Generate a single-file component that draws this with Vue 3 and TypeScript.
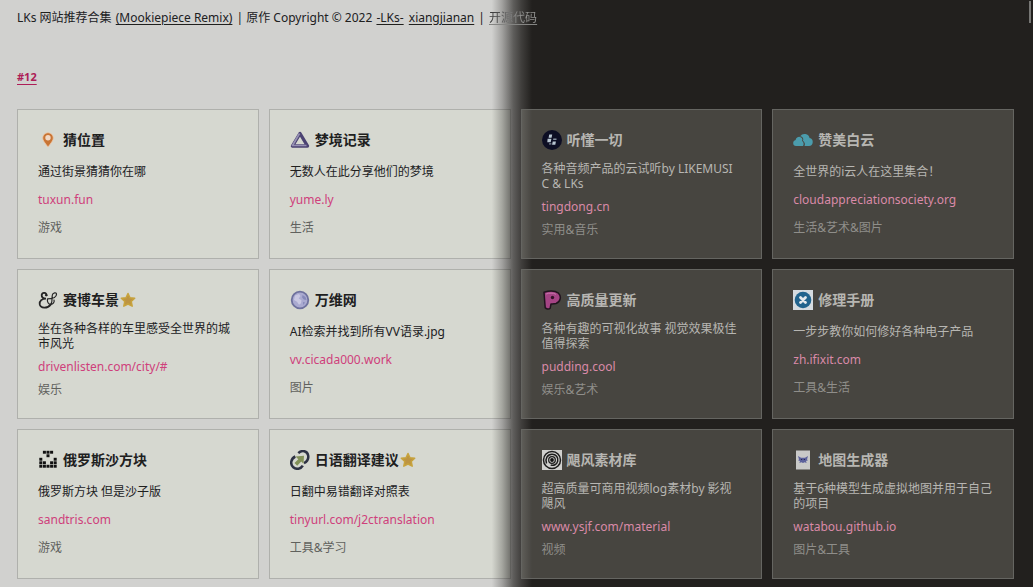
<script setup lang="ts">
type Icon =
  | 'pin' | 'triangle' | 'tiles' | 'cloud' | 'ampersand' | 'globe'
  | 'pudding' | 'wrench' | 'blocks' | 'cycle' | 'spiral' | 'map'

interface Site {
  icon: Icon
  title: string
  desc: string
  link: string
  tag: string
  star?: boolean
}

const sites: Site[] = [
  { icon: 'pin', title: '猜位置', desc: '通过街景猜猜你在哪', link: 'tuxun.fun', tag: '游戏' },
  { icon: 'triangle', title: '梦境记录', desc: '无数人在此分享他们的梦境', link: 'yume.ly', tag: '生活' },
  { icon: 'tiles', title: '听懂一切', desc: '各种音频产品的云试听by LIKEMUSI\nC & LKs', link: 'tingdong.cn', tag: '实用&音乐' },
  { icon: 'cloud', title: '赞美白云', desc: '全世界的i云人在这里集合！', link: 'cloudappreciationsociety.org', tag: '生活&艺术&图片' },
  { icon: 'ampersand', title: '赛博车景', desc: '坐在各种各样的车里感受全世界的城市风光', link: 'drivenlisten.com/city/#', tag: '娱乐', star: true },
  { icon: 'globe', title: '万维网', desc: 'AI检索并找到所有VV语录.jpg', link: 'vv.cicada000.work', tag: '图片' },
  { icon: 'pudding', title: '高质量更新', desc: '各种有趣的可视化故事 视觉效果极佳 值得探索', link: 'pudding.cool', tag: '娱乐&艺术' },
  { icon: 'wrench', title: '修理手册', desc: '一步步教你如何修好各种电子产品', link: 'zh.ifixit.com', tag: '工具&生活' },
  { icon: 'blocks', title: '俄罗斯沙方块', desc: '俄罗斯方块 但是沙子版', link: 'sandtris.com', tag: '游戏' },
  { icon: 'cycle', title: '日语翻译建议', desc: '日翻中易错翻译对照表', link: 'tinyurl.com/j2ctranslation', tag: '工具&学习', star: true },
  { icon: 'spiral', title: '飓风素材库', desc: '超高质量可商用视频log素材by 影视飓风', link: 'www.ysjf.com/material', tag: '视频' },
  { icon: 'map', title: '地图生成器', desc: '基于6种模型生成虚拟地图并用于自己的项目', link: 'watabou.github.io', tag: '图片&工具' },
]

const blockRows = ['.###.', '..#..', '#...#', '##.##', '#####']
const blockCells = blockRows.flatMap((row, y) =>
  [...row].flatMap((c, x) => (c === '#' ? [{ x: 1.3 + x * 3.6, y: 0.8 + y * 3.5 }] : [])),
)
</script>

<template>
  <div class="page">
    <header class="top">
      LKs 网站推荐合集 <a href="#remix">(Mookiepiece Remix)</a> | 原作 Copyright © 2022
      <a href="#lks">-LKs-</a>&nbsp;<a href="#author">xiangjianan</a> |
      <a href="#source" class="source">开源代码</a>
    </header>
    <h2 class="issue"><a id="issue-12" href="#issue-12">#12</a></h2>
    <div class="shade" aria-hidden="true"></div>
    <main class="grid">
      <article v-for="site in sites" :key="site.link" class="card">
        <h3 class="title">
          <svg class="icon" viewBox="0 0 20 20" aria-hidden="true">
            <g v-if="site.icon === 'pin'">
              <path d="M10 17C7 13 4.700 10.500 4.700 8a5.300 5.300 0 0 1 10.600 0c0 2.500-2.300 5-5.300 9z" fill="#c87535" stroke="#efc6a4" stroke-width="0.800" />
              <circle cx="10" cy="7.700" r="2.700" fill="#f1d9c6" />
            </g>
            <g v-else-if="site.icon === 'triangle'" stroke-linejoin="round" fill="none">
              <path d="M10 3.500 2.500 16h15z" stroke="#4b4272" stroke-width="3.400" />
              <path d="M9.500 3.500 2.500 15.500h14" stroke="#9690b3" stroke-width="1.700" />
            </g>
            <g v-else-if="site.icon === 'tiles'">
              <circle cx="10" cy="10" r="10" fill="#0d0e24" />
              <g fill="#b9c6d2">
                <path d="M7.200 4.500h3l-.6 3.300h-3zM5.600 8.800h3.800l-.7 3.500H5.300zM10.700 11.500h3.200l-.6 3.300h-3.200z" />
                <path d="M11.300 8.600h3.200v1.300h-3.400zM7.200 13.200h2.200v1.300H7z" opacity=".7" />
              </g>
            </g>
            <g v-else-if="site.icon === 'cloud'" fill="#4b9cac">
              <path d="M11.500 16H16a4 4 0 0 0 .6-7.900A5.200 5.200 0 0 0 7.200 6.300C10 6.700 10.800 9 10 10.700c1.800 1.500 2.400 3.500 1.500 5.300z" />
              <path d="M.2 13.300A3 3 0 0 1 2.600 10 3.700 3.700 0 0 1 7 6.900c2.400.5 2.800 2.600 2 4.100 1.900 1.200 2 3.500 1 5H3A2.800 2.800 0 0 1 .2 13.300z" />
            </g>
            <g v-else-if="site.icon === 'ampersand'" fill="none" stroke="#252525" stroke-linecap="round">
              <path d="M8.300 5.200C9 2.600 4.200 1.700 3.700 5 3.400 7.500 5.500 8.600 8 8.600 4 8.600 1.300 11 1.700 14.200 2.400 18.600 9.500 18.900 12.600 14.600" stroke-width="1.800" />
              <path d="M12.600 14.600C15 11 13.700 8 14.300 5.200 14.800 2.400 18.500 2 18.500 4.200 18.500 7 14.500 8.700 9.500 8.800M9.500 8.800c-.6 3.200 1 5.600 3.200 5.600 2.500 0 4-2.400 3.300-4.400" stroke-width="1.200" />
              <circle cx="8.200" cy="5.200" r=".8" fill="#252525" />
            </g>
            <g v-else-if="site.icon === 'globe'">
              <circle cx="10" cy="10" r="8.300" fill="#aaaad0" stroke="#6e719d" stroke-width="1.800" />
              <path d="M5 5.500 9 4l1.500 2-1.800 2.500 2.800 1.800-.5 3-2 1.500-2-3L4 10z" fill="#c9c8e2" />
              <path d="M12.500 5l3 2 1 3-2.700-.4-1.700-2zM13 12l2 .6-1.700 2.400z" fill="#8589b8" />
            </g>
            <g v-else-if="site.icon === 'pudding'">
              <path d="M2 2.200C6.500.8 13 .5 16.500 3.200c3.500 3.500 1.500 9-2.500 10.300-2 .6-4 .4-5 .5l-.8 4.200c-1.300 1.200-4 .8-5-.5z" fill="#a54485" stroke="#20131e" stroke-width="1.500" stroke-linejoin="round" />
              <path d="M4 4c3-1 7-1.500 10 .3" stroke="#c876ad" fill="none" />
              <circle cx="10.500" cy="7.500" r="1.700" fill="#321128" />
            </g>
            <g v-else-if="site.icon === 'wrench'">
              <path d="M0 0h20v20H0z" fill="#d5dbe0" />
              <circle cx="10" cy="10" r="8.300" fill="#21638d" />
              <path d="m7.500 7.500 5 5m0-5-5 5" stroke="#e5e9ec" stroke-width="2.800" stroke-linecap="round" />
            </g>
            <g v-else-if="site.icon === 'blocks'" fill="#111">
              <rect v-for="(cell, i) in blockCells" :key="i" :x="cell.x" :y="cell.y" width="3" height="2.900" />
            </g>
            <g v-else-if="site.icon === 'cycle'" fill="none">
              <path d="M8.300 3.100C12-.5 17.500 1 18.200 5.600c.5 3.500-1.400 6.200-4.200 7.500M5.300 6.500C1 8.500-.3 14 3.300 17.300c3 2.500 7.700 1.700 9.500-1.600" stroke="#2d3143" stroke-width="2.500" />
              <path d="m5.500 6.500 8.500-.7-.5 8-2.300-2.300-4 4.200-2.700-2.700 3.800-3.700z" fill="#829058" />
            </g>
            <g v-else-if="site.icon === 'spiral'" fill="none">
              <path d="M0 0h20v20H0z" fill="#d0d0ce" />
              <circle cx="10" cy="10" r="8.500" stroke="#1d1d1d" stroke-width="1.500" />
              <path d="M4.500 13.500C2.700 9 5.500 4.300 10 4.300c4 0 6.500 3.200 5.700 6.800-.8 3.500-4.200 5.100-7 3.700" stroke="#1d1d1d" stroke-width="1.500" />
              <circle cx="10" cy="10" r="3.300" stroke="#1d1d1d" stroke-width="1.300" />
              <circle cx="10" cy="10" r="1.900" fill="#111" />
            </g>
            <g v-else>
              <path d="M3 .5h14v19H3z" fill="#c9c9c8" />
              <path d="m5 6 3 1.800h4L15 6l-1 3.500 1 .8-2 .6.600 2-2-.7-1.600.8-1.600-.8-2 .7.600-2-2-.6 1-.8z" fill="#5c619c" />
              <path d="M8 9.500h1.200M10.800 9.500H12" stroke="#26294f" />
            </g>
          </svg>
          <span>{{ site.title }}</span>
          <svg v-if="site.star" class="star" viewBox="0 0 16 16" role="img" aria-label="推荐">
            <path d="M8 1.500 10 5.800l4.700.5-3.500 3.200 1 4.700L8 12l-4.200 2.200 1-4.700-3.500-3.200L6 5.800z" fill="#bd9442" stroke="#c7a33d" stroke-width="1.500" stroke-linejoin="round" />
          </svg>
        </h3>
        <div class="body">
          <p class="desc">{{ site.desc }}</p>
          <a class="link" :href="'https://' + site.link">{{ site.link }}</a>
          <p class="tag">{{ site.tag }}</p>
        </div>
      </article>
    </main>
    <div class="thumb" aria-hidden="true"></div>
  </div>
</template>

<style>
html {
  height: 100%;
  overflow: hidden;
}
body {
  margin: 0;
  height: 100%;
  overflow: hidden;
}
</style>

<style scoped>
.page {
  position: relative;
  box-sizing: border-box;
  min-height: 100vh;
  padding: 10px 19px 10px 17px;
  background: #d1d1cf;
  color: #20201e;
  font: 12px/16px "Noto Sans", "Noto Sans CJK SC", sans-serif;
}
.top {
  position: relative;
  z-index: 2;
}
.top a {
  margin: 0 1px;
  color: inherit;
  text-underline-offset: 2px;
}
.top .source {
  color: transparent;
  background: linear-gradient(90deg, #333 0, #555 25%, #777 45%, #8d8d8b 60%, #9a9a98 100%);
  -webkit-background-clip: text;
  background-clip: text;
  text-decoration-color: #858583;
}
.issue {
  margin: 43px 0 24px;
  font-size: 11px;
  line-height: 16px;
}
.issue a {
  color: #ad1d57;
  text-underline-offset: 3px;
}
.shade {
  position: absolute;
  z-index: 1;
  inset: 0;
  background: linear-gradient(90deg, transparent 47.6%, rgba(35, 33, 31, 0.27) 48.6%, rgba(35, 33, 31, 0.66) 49.7%, rgba(35, 33, 31, 0.84) 50.5%, #22201e 51.5%);
  pointer-events: none;
}
.grid {
  display: grid;
  grid-template-columns: repeat(4, minmax(0, 1fr));
  gap: 10px;
}
.card {
  padding: 20px 20px 17px;
  border: 1px solid #afb0ac;
  background: #d6d8d0;
}
.card:nth-child(4n + 3),
.card:nth-child(4n) {
  position: relative;
  z-index: 2;
  border-color: #656561;
  background: rgba(255, 255, 240, 0.17);
  color: #b7b6b2;
}
.title {
  display: flex;
  align-items: center;
  height: 20px;
  margin: 0 0 7px;
  font-size: 14px;
  line-height: 20px;
}
.icon {
  width: 20px;
  height: 20px;
  margin-right: 5px;
}
.star {
  width: 16px;
  height: 16px;
  margin-left: 1px;
}
.body {
  display: flex;
  flex-direction: column;
  align-items: flex-start;
  justify-content: space-around;
  min-height: 84px;
  line-height: 15px;
}
.desc,
.tag {
  margin: 0;
}
.desc {
  white-space: pre-line;
  word-break: break-all;
}
.link {
  color: #cf407b;
  text-decoration: none;
}
.tag {
  color: #60615d;
}
.card:nth-child(4n + 3) .link,
.card:nth-child(4n) .link {
  color: #da8aa8;
}
.card:nth-child(4n + 3) .tag,
.card:nth-child(4n) .tag {
  color: #8f8e8a;
}
.thumb {
  position: fixed;
  z-index: 3;
  top: 1px;
  right: 2px;
  width: 2px;
  height: 22px;
  background: #777775;
}
</style>
